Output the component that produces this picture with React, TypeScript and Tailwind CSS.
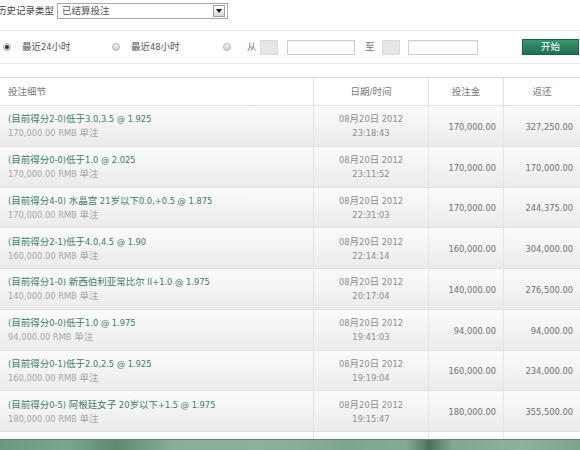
import React from "react";

const CJK = /([\u2E80-\u9FFF\uFF00-\uFFEF]+)/;

function T({ s }: { s: string }) {
  const parts = s.split(CJK);
  return (
    <>
      {parts.map((p, i) =>
        i % 2 === 1 ? (
          <span key={i} className="text-[9.5px]">
            {p}
          </span>
        ) : (
          <React.Fragment key={i}>{p}</React.Fragment>
        )
      )}
    </>
  );
}

type Row = { title: string; stake: string; time: string; ret: string };

const rows: Row[] = [
  { title: "(目前得分2-0)低于3.0,3.5 @ 1.925", stake: "170,000.00", time: "23:18:43", ret: "327,250.00" },
  { title: "(目前得分0-0)低于1.0 @ 2.025", stake: "170,000.00", time: "23:11:52", ret: "170,000.00" },
  { title: "(目前得分4-0) 水晶宫 21岁以下0.0,+0.5 @ 1.875", stake: "170,000.00", time: "22:31:03", ret: "244,375.00" },
  { title: "(目前得分2-1)低于4.0,4.5 @ 1.90", stake: "160,000.00", time: "22:14:14", ret: "304,000.00" },
  { title: "(目前得分1-0) 新西伯利亚常比尔 II+1.0 @ 1.975", stake: "140,000.00", time: "20:17:04", ret: "276,500.00" },
  { title: "(目前得分0-0)低于1.0 @ 1.975", stake: "94,000.00", time: "19:41:03", ret: "94,000.00" },
  { title: "(目前得分0-1)低于2.0,2.5 @ 1.925", stake: "160,000.00", time: "19:19:04", ret: "234,000.00" },
  { title: "(目前得分0-5) 阿根廷女子 20岁以下+1.5 @ 1.975", stake: "180,000.00", time: "19:15:47", ret: "355,500.00" },
];

function Radio({ checked }: { checked?: boolean }) {
  return (
    <div className="w-[8px] h-[8px] shrink-0 rounded-full border border-[#b0b0b0] bg-gradient-to-b from-[#f6f6f6] to-[#cfcfcf] flex items-center justify-center">
      {checked && <div className="w-[4px] h-[4px] rounded-full bg-[#223350]" />}
    </div>
  );
}

export default function App() {
  return (
    <div className="w-[580px] h-[450px] overflow-hidden bg-white flex flex-col font-['DejaVu_Sans','Noto_Sans_CJK_SC',sans-serif] text-[8.3px] leading-[14px]">
      {/* top select row */}
      <div className="h-[31px] shrink-0 flex items-start pt-[3px] border-b border-[#e8e8e8]">
        <span className="ml-[-3px] mt-[1px] text-[#444] whitespace-nowrap">
          <T s="历史记录类型" />
        </span>
        <div className="ml-[3px] w-[171px] h-[16px] border border-[#a8a8a8] flex items-center justify-between pl-[4px] pr-[2px]">
          <span className="text-[#555]">
            <T s="已结算投注" />
          </span>
          <div className="w-[12px] h-[12px] border border-[#9c9c9c] bg-gradient-to-b from-white to-[#d8d8d8] flex items-center justify-center">
            <div className="w-0 h-0 border-l-[3px] border-r-[3px] border-t-[4px] border-l-transparent border-r-transparent border-t-[#111]" />
          </div>
        </div>
      </div>

      {/* radio row */}
      <div className="h-[33px] shrink-0 flex items-center border-b border-[#e8e8e8] text-[#555]">
        <div className="ml-[3px]">
          <Radio checked />
        </div>
        <span className="ml-[11px] w-[90px] whitespace-nowrap">
          <T s="最近24小时" />
        </span>
        <Radio />
        <span className="ml-[11px] w-[92px] whitespace-nowrap">
          <T s="最近48小时" />
        </span>
        <Radio />
        <span className="ml-[16px] w-[13px] text-[#777]">
          <T s="从" />
        </span>
        <div className="w-[18px] h-[15px] bg-[#e6e6e6] border border-[#dadada]" />
        <div className="ml-[9px] w-[68px] h-[15px] bg-white border border-[#cfcfcf] shadow-[inset_0_1px_1px_rgba(0,0,0,0.06)]" />
        <span className="ml-[10px] w-[16px] text-[#777]">
          <T s="至" />
        </span>
        <div className="ml-[1px] w-[18px] h-[15px] bg-[#e6e6e6] border border-[#dadada]" />
        <div className="ml-[8px] w-[70px] h-[15px] bg-white border border-[#cfcfcf] shadow-[inset_0_1px_1px_rgba(0,0,0,0.06)]" />
        <button className="ml-[44px] w-[57px] h-[16px] border border-[#1a6446] bg-gradient-to-b from-[#3a9672] to-[#1e7150] text-white flex items-center justify-center">
          <T s="开始" />
        </button>
      </div>

      <div className="h-[13px] shrink-0" />

      {/* header */}
      <div className="h-[28px] shrink-0 flex border-t border-[#dedede] bg-white text-[#777]">
        <div className="w-[313px] pl-[8px] flex items-center">
          <T s="投注细节" />
        </div>
        <div className="w-[115px] border-l border-[#e2e2e2] flex items-center justify-center">
          <T s="日期/时间" />
        </div>
        <div className="w-[75px] border-l border-[#e2e2e2] flex items-center justify-center">
          <T s="投注金" />
        </div>
        <div className="w-[77px] border-l border-[#e2e2e2] flex items-center justify-center">
          <T s="返还" />
        </div>
      </div>

      {rows.map((r, i) => (
        <div
          key={i}
          className="h-[40.75px] shrink-0 flex border-t border-[#e0e0e0] bg-gradient-to-b from-[#fbfbfb] to-[#ebebeb]"
        >
          <div className="w-[313px] pl-[8px] pt-[1px] flex flex-col justify-center">
            <div className="text-[#3b7e63] whitespace-nowrap">
              <T s={r.title} />
            </div>
            <div className="text-[#a5a5a5] whitespace-nowrap">
              <T s={`${r.stake} RMB 单注`} />
            </div>
          </div>
          <div className="w-[115px] pt-[1px] border-l border-[#e4e4e4] flex flex-col justify-center items-center text-[#8c8c8c]">
            <div>
              <T s="08月20日 2012" />
            </div>
            <div>{r.time}</div>
          </div>
          <div className="w-[75px] pt-[2px] pr-[7px] border-l border-[#e4e4e4] flex items-center justify-end text-[#707070]">
            {r.stake}
          </div>
          <div className="w-[77px] pt-[2px] pr-[7px] border-l border-[#e4e4e4] flex items-center justify-end text-[#707070]">
            {r.ret}
          </div>
        </div>
      ))}

      {/* partially visible next row */}
      <div className="h-[8px] shrink-0 flex border-t border-[#e0e0e0] bg-white">
        <div className="w-[313px]" />
        <div className="w-[115px] border-l border-[#e4e4e4]" />
        <div className="w-[75px] border-l border-[#e4e4e4]" />
        <div className="w-[77px] border-l border-[#e4e4e4]" />
      </div>
      <div className="h-[1px] shrink-0 bg-[#6f7d77]" />
      <div className="flex-1 bg-[linear-gradient(90deg,#6c9882_0%,#7aa58e_12%,#5f8a70_20%,#86ae98_30%,#8bb29d_45%,#7da690_60%,#82ab96_70%,#4d7259_74%,#7fa791_78%,#8cb29e_90%,#7ea48f_100%)]" />
    </div>
  );
}
